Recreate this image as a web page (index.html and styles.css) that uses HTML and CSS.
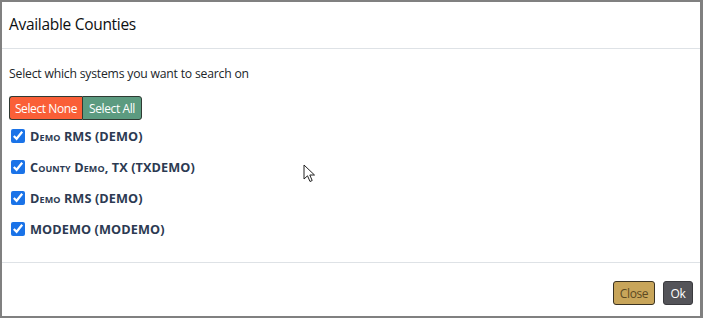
FILE: index.html
```html
<!DOCTYPE html>
<html lang="en">
<head>
	<meta charset="UTF-8" />
	<meta name="viewport" content="width=device-width, initial-scale=1.0" />
	<title>Available Counties</title>
	<link rel="stylesheet" href="styles.css">
</head>
<body>
	<div class="modal">
		<div class="modal-header">
			<h5>Available Counties</h5>
		</div>
		<div class="modal-body">
			<p class="hint">Select which systems you want to search on</p>
			<div class="btn-group">
				<button class="btn-none">Select None</button>
				<button class="btn-all">Select All</button>
			</div>
			<ul class="systems">
				<li><label><input type="checkbox" checked /> <span>Demo RMS (DEMO)</span></label></li>
				<li><label><input type="checkbox" checked /> <span>County Demo, TX (TXDEMO)</span></label></li>
				<li><label><input type="checkbox" checked /> <span>Demo RMS (DEMO)</span></label></li>
				<li><label><input type="checkbox" checked /> <span>MODEMO (MODEMO)</span></label></li>
			</ul>
		</div>
		<div class="modal-footer">
			<button class="btn-close">Close</button>
			<button class="btn-ok">Ok</button>
		</div>
		<!-- 鼠标指针 -->
		<svg class="cursor" width="14" height="20" viewBox="0 0 14 20">
			<path d="M1 1 L1 15 L4.5 11.8 L7 17.5 L9.2 16.5 L6.8 11 L11.5 11 Z" fill="#fff" stroke="#222" stroke-width="1" stroke-linejoin="round" />
		</svg>
	</div>
</body>
</html>
```

FILE: styles.css
```css
* {
	padding: 0;
	margin: 0;
	box-sizing: border-box;
}

body {
	width: 703px;
	height: 318px;
	overflow: hidden;
	background-color: #fff;
	font-family: "Open Sans", "Noto Sans", sans-serif;
}

/* 模态框 start */
.modal {
	position: relative;
	display: flex;
	flex-direction: column;
	width: 703px;
	height: 318px;
	border-style: solid;
	border-color: #808080;
	border-width: 2px 3px 2px 2px;
	background-color: #fff;
}

.modal-header {
	height: 47px;
	padding: 11px 7px 0;
	border-bottom: 1px solid #dee2e6;
}

.modal-header h5 {
	font-size: 15.5px;
	font-weight: 500;
	color: #0d0f11;
	letter-spacing: -0.3px;
}

.modal-body {
	height: 214px;
	padding: 16px 7px 0;
	border-bottom: 1px solid #dee2e6;
}

.hint {
	font-size: 12.2px;
	color: #212529;
	letter-spacing: -0.2px;
	line-height: 18px;
}

.btn-group {
	display: flex;
	margin-top: 13px;
}

.btn-group button {
	height: 24px;
	font-family: inherit;
	font-size: 12px;
	letter-spacing: -0.4px;
	color: #fff;
	border: 1px solid #2f3a33;
	cursor: pointer;
}

.btn-none {
	width: 73px;
	background-color: #fa5f37;
	border-radius: 3px 0 0 3px;
	border-right: 0 !important;
}

.btn-all {
	width: 60px;
	background-color: #5c9b80;
	border-radius: 0 3px 3px 0;
}

.systems {
	list-style: none;
	margin-top: 7px;
}

.systems li {
	height: 31px;
}

.systems label {
	display: flex;
	align-items: center;
	gap: 5px;
	height: 18px;
	padding-left: 2px;
	cursor: pointer;
}

.systems input {
	width: 14px;
	height: 14px;
	accent-color: #1a73e8;
}

.systems span {
	font-size: 12.7px;
	font-weight: 700;
	font-variant: small-caps;
	color: #2c3a52;
	letter-spacing: 0.1px;
}

.modal-footer {
	flex: 1;
	display: flex;
	justify-content: flex-end;
	align-items: flex-start;
	gap: 8px;
	padding: 18px 7px 0 0;
}

.modal-footer button {
	height: 24px;
	font-family: inherit;
	font-size: 12px;
	letter-spacing: -0.4px;
	border-radius: 3px;
	cursor: pointer;
}

.btn-close {
	width: 42px;
	color: #5c4a22;
	background-color: #c8a55a;
	border: 1px solid #3a3222;
}

.btn-ok {
	width: 30px;
	color: #fff;
	background-color: #545459;
	border: 1px solid #3a3a3e;
}

.cursor {
	position: absolute;
	left: 301px;
	top: 162px;
}
/* 模态框 end */
```
